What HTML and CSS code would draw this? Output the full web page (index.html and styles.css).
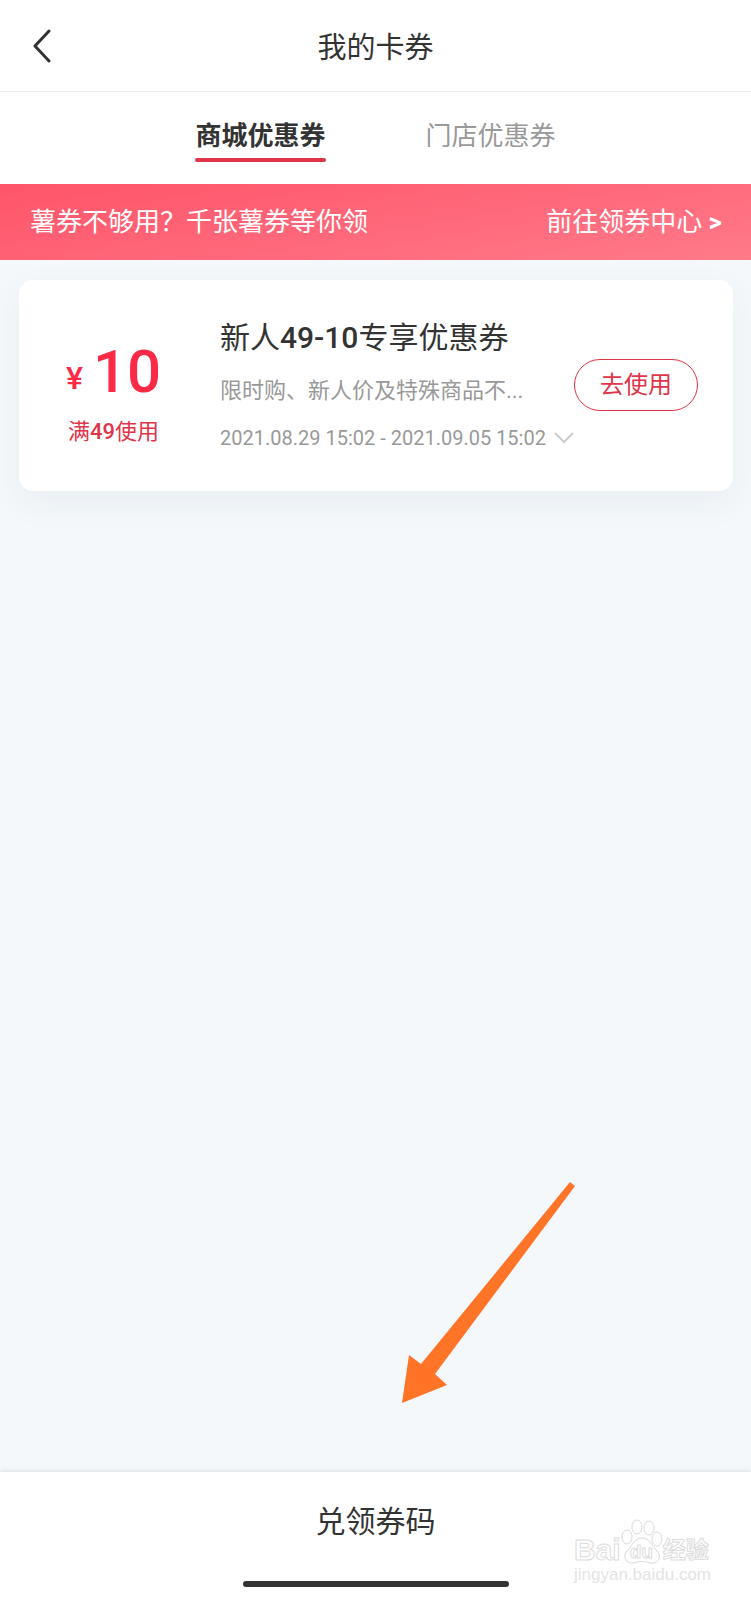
FILE: index.html
```html
<!DOCTYPE html>
<html lang="zh-CN">
<head>
<meta charset="utf-8">
<meta name="viewport" content="width=device-width, initial-scale=1">
<title>我的卡券</title>
<link rel="stylesheet" href="styles.css">
</head>
<body>
<div class="app">
  <header class="header">
    <button class="back" type="button" aria-label="返回">
      <svg width="18" height="34" viewBox="0 0 18 34" fill="none" stroke="#333" stroke-width="3" stroke-linecap="round" stroke-linejoin="round"><path d="M16 2 L2 17 L16 32"/></svg>
    </button>
    <h1 class="title">我的卡券</h1>
  </header>
  <nav class="tabs">
    <button class="tab tab-active" type="button">商城优惠券</button>
    <button class="tab" type="button">门店优惠券</button>
  </nav>
  <section class="banner">
    <p class="banner-text">薯券不够用？千张薯券等你领</p>
    <a class="banner-link" href="#">前往领券中心 <span class="banner-arrow">&gt;</span></a>
  </section>
  <main class="content">
    <article class="card">
      <div class="value">
        <div class="amount"><span class="currency">¥</span><span class="number">10</span></div>
        <p class="limit">满<span class="figure">49</span>使用</p>
      </div>
      <div class="info">
        <h2 class="name">新人<span class="figure">49-10</span>专享优惠券</h2>
        <p class="desc">限时购、新人价及特殊商品不...</p>
        <p class="date">2021.08.29 15:02 - 2021.09.05 15:02
          <svg class="chevron" width="20" height="12" viewBox="0 0 20 12" fill="none" stroke="#ccc" stroke-width="2"><path d="M1 1 L10 10 L19 1"/></svg>
        </p>
      </div>
      <button class="use" type="button">去使用</button>
    </article>
    <svg class="pointer" width="174" height="222" viewBox="0 0 174 222" fill="#ff7426"><path d="M168 0 L173 4 L33 192 L45 203 L0 221 L7 173 L19 182 Z"/></svg>
  </main>
  <footer class="footer">
    <button class="redeem" type="button">兑领券码</button>
    <div class="home-bar"></div>
    <div class="mark">
      <div class="mark-row">
        <span class="mark-bai">Bai</span>
        <span class="mark-paw">
          <svg width="42" height="46" viewBox="0 0 42 46" fill="#fff" stroke="#d9d9d9" stroke-width="1"><ellipse cx="6" cy="18" rx="5" ry="7"/><ellipse cx="16" cy="8" rx="5" ry="7"/><ellipse cx="28" cy="9" rx="5" ry="7"/><ellipse cx="36" cy="20" rx="5" ry="7"/><path d="M21 19 C29 19 31 27 36 32 C42 39 36 45 29 44 C23 42 18 42 13 44 C5 45 1 38 6 32 C11 27 13 19 21 19 Z"/></svg>
          <span class="mark-du">du</span>
        </span>
        <span class="mark-cn">经验</span>
      </div>
      <div class="mark-url">jingyan.baidu.com</div>
    </div>
  </footer>
</div>
</body>
</html>
```
FILE: styles.css
```css
* { box-sizing: border-box; }
body {
  margin: 0;
  background: #f4f8fb;
  color: #333;
  font-family: Roboto, "Noto Sans CJK SC", sans-serif;
}
h1, h2, p { margin: 0; font-weight: 400; }
button {
  padding: 0;
  border: 0;
  background: none;
  color: inherit;
  font: inherit;
  cursor: pointer;
}
svg { display: block; }
.app {
  display: flex;
  flex-direction: column;
  min-height: 100vh;
}
.header {
  position: relative;
  display: flex;
  align-items: center;
  justify-content: center;
  height: 92px;
  background: #fff;
  border-bottom: 1px solid #eee;
}
.back {
  position: absolute;
  left: 24px;
  padding: 9px;
}
.title { padding-top: 4px; font-size: 29px; line-height: 48px; }
.tabs {
  display: flex;
  justify-content: center;
  gap: 100px;
  padding: 24px 0 22px;
  background: #fff;
}
.tab {
  position: relative;
  height: 46px;
  padding: 2px 0 8px;
  color: #999;
  font-size: 26px;
  line-height: 36px;
}
.tab-active {
  color: #333;
  font-weight: 700;
}
.tab-active::after {
  content: "";
  position: absolute;
  left: 0;
  right: 0;
  bottom: 0;
  height: 4px;
  border-radius: 2px;
  background: #e03448;
}
.banner {
  display: flex;
  align-items: center;
  justify-content: space-between;
  height: 76px;
  padding: 0 29px 0 30px;
  background: linear-gradient(170deg, #ff5469, #ff7a8a);
  color: #fff;
  font-size: 26px;
  line-height: 40px;
}
.banner-link { color: inherit; text-decoration: none; }
.banner-arrow { font-weight: 700; }
.content {
  position: relative;
  flex: 1;
  padding: 20px 18px 20px 19px;
}
.card {
  display: flex;
  align-items: center;
  padding: 36px 35px 37px 0;
  border-radius: 14px;
  background: #fff;
  box-shadow: 0 12px 36px rgba(40, 60, 80, 0.05);
}
.value {
  display: flex;
  flex-direction: column;
  align-items: center;
  gap: 14px;
  width: 189px;
  padding-top: 20px;
  color: #fb2b48;
  font-weight: 500;
}
.amount { display: flex; align-items: flex-end; gap: 10px; }
.currency { font-size: 32px; line-height: 48px; }
.number { font-size: 60px; line-height: 60px; }
.limit { color: #e03448; font-size: 22px; line-height: 32px; }
.figure { font-weight: 500; }
.info {
  display: flex;
  flex: 1;
  flex-direction: column;
  gap: 15px;
  min-width: 0;
  padding-left: 12px;
}
.name { font-size: 30px; line-height: 44px; }
.desc {
  color: #999;
  font-size: 22px;
  line-height: 32px;
  white-space: nowrap;
}
.date {
  display: flex;
  align-items: center;
  gap: 8px;
  color: #999;
  font-size: 20px;
  line-height: 32px;
  white-space: nowrap;
}
.chevron { flex: none; }
.use {
  flex: none;
  width: 124px;
  height: 52px;
  border: 1px solid #e03448;
  border-radius: 26px;
  color: #e03448;
  font-size: 24px;
  line-height: 48px;
}
.pointer {
  position: absolute;
  right: 175px;
  bottom: 68px;
}
.footer {
  position: relative;
  display: flex;
  flex-direction: column;
  align-items: center;
  padding: 24px 0 13px;
  background: #fff;
  box-shadow: 0 -1px 4px rgba(0, 0, 0, 0.1);
}
.redeem {
  width: 100%;
  font-size: 30px;
  line-height: 52px;
}
.home-bar {
  width: 266px;
  height: 6px;
  margin-top: 33px;
  border-radius: 3px;
  background: #333;
}
.mark {
  position: absolute;
  right: 40px;
  bottom: 15px;
  color: #fff;
  -webkit-text-stroke: 1px #dcdcdc;
}
.mark-row { display: flex; align-items: flex-end; }
.mark-bai {
  font: 700 30px/30px "Liberation Sans", sans-serif;
}
.mark-paw { position: relative; }
.mark-du {
  position: absolute;
  left: 9px;
  bottom: 3px;
  font: 700 19px/20px "Liberation Sans", sans-serif;
}
.mark-cn { font-size: 23px; font-weight: 700; line-height: 28px; }
.mark-url {
  color: #e4e4e4;
  font: 17px/20px "Liberation Sans", sans-serif;
  -webkit-text-stroke: 0;
}
```
